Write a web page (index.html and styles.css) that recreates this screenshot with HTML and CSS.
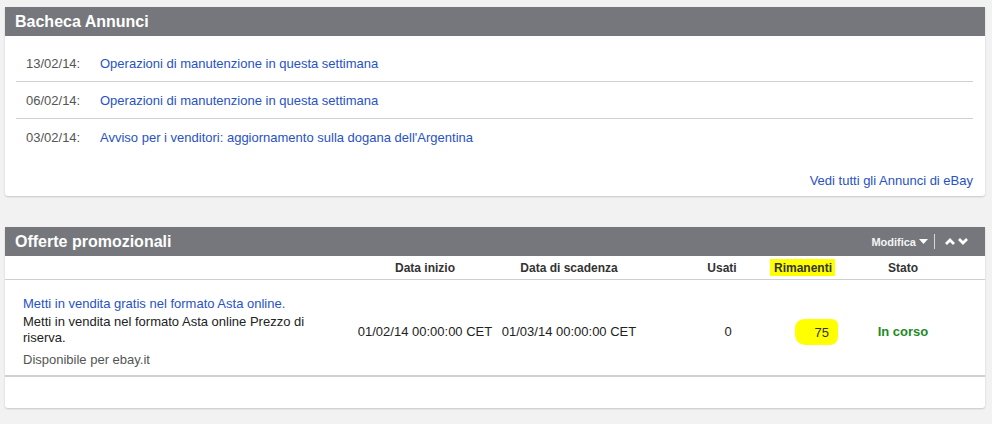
FILE: index.html
```
<!doctype html>
<html lang="it">
  <head>
    <meta charset="UTF-8" />
    <title>Bacheca</title>
    <link rel="stylesheet" href="styles.css">
  </head>
  <body>
    <div class="page">
      <div class="card">
        <div class="card-head">
          <h2>Bacheca Annunci</h2>
        </div>
        <div class="news">
          <div class="news-row">
            <span class="news-date">13/02/14:</span>
            <a href="#">Operazioni di manutenzione in questa settimana</a>
          </div>
          <div class="news-row">
            <span class="news-date">06/02/14:</span>
            <a href="#">Operazioni di manutenzione in questa settimana</a>
          </div>
          <div class="news-row">
            <span class="news-date">03/02/14:</span>
            <a href="#">Avviso per i venditori: aggiornamento sulla dogana dell'Argentina</a>
          </div>
        </div>
        <div class="news-foot">
          <a href="#">Vedi tutti gli Annunci di eBay</a>
        </div>
      </div>

      <div class="card promo">
        <div class="card-head">
          <h2>Offerte promozionali</h2>
          <div class="head-tools">
            <span class="modifica">Modifica</span>
            <svg class="caret" width="9" height="5" viewBox="0 0 9 5"><path d="M0 0h9L4.5 5z" fill="#fff"/></svg>
            <span class="tool-sep"></span>
            <svg class="chev" width="10" height="7" viewBox="0 0 10 7"><path d="M1 6L5 2L9 6" stroke="#fff" stroke-width="2.8" fill="none"/></svg>
            <svg class="chev down" width="10" height="7" viewBox="0 0 10 7"><path d="M1 1L5 5L9 1" stroke="#fff" stroke-width="2.8" fill="none"/></svg>
          </div>
        </div>
        <div class="promo-grid promo-labels">
          <span></span>
          <span>Data inizio</span>
          <span>Data di scadenza</span>
          <span class="c-used">Usati</span>
          <span class="c-left"><mark>Rimanenti</mark></span>
          <span class="c-state">Stato</span>
        </div>
        <div class="promo-grid promo-row">
          <div class="promo-desc">
            <a href="#">Metti in vendita gratis nel formato Asta online.</a>
            <p>Metti in vendita nel formato Asta online Prezzo di riserva.</p>
            <p class="avail">Disponibile per ebay.it</p>
          </div>
          <span>01/02/14 00:00:00 CET</span>
          <span>01/03/14 00:00:00 CET</span>
          <span class="c-used num">0</span>
          <span class="c-left"><mark class="blob">75</mark></span>
          <span class="c-state ok">In corso</span>
        </div>
        <div class="promo-empty"></div>
      </div>
    </div>
  </body>
</html>
```

FILE: styles.css
```
body {
  margin: 0;
  background: #f2f2f2;
  font-family: "Liberation Sans", Arial, sans-serif;
  font-size: 13px;
  color: #333;
}
a {
  color: #2852c4;
  text-decoration: none;
}
.page {
  width: 980px;
  padding: 7px 0 0 5px;
}
.card {
  background: #fff;
  border-radius: 0 0 3px 3px;
  box-shadow: 0 1px 2px rgba(0, 0, 0, 0.18);
  margin-bottom: 31px;
}
.card-head {
  height: 29px;
  background: #75777c;
  display: flex;
  align-items: center;
  justify-content: space-between;
  padding: 0 17px 0 10px;
}
.card-head h2 {
  margin: 0;
  color: #fff;
  font-size: 16px;
  font-weight: bold;
}

/* annunci */
.news {
  padding: 9px 12px 0 11px;
}
.news-row {
  height: 36px;
  display: flex;
  align-items: center;
  padding-left: 10px;
  border-bottom: 1px solid #d0d0d0;
}
.news-row:last-child {
  border-bottom: none;
}
.news-date {
  width: 74px;
  color: #555;
}
.news-foot {
  text-align: right;
  padding: 17px 12px 6px 0;
  line-height: 18px;
}

/* offerte */
.head-tools {
  display: flex;
  align-items: center;
}
.modifica {
  color: #f4f4f4;
  font-size: 11px;
  font-weight: bold;
}
.caret {
  margin-left: 3px;
}
.tool-sep {
  width: 1px;
  height: 15px;
  background: #d8d8d8;
  margin: 0 10px 0 6px;
}
.chev.down {
  margin-left: 3px;
}
.promo-grid {
  display: grid;
  grid-template-columns: 352px 136px 152px 125px 70px 145px;
  align-items: center;
  text-align: center;
}
.promo-labels {
  height: 23px;
  border-bottom: 1px solid #cfcfcf;
  font-weight: bold;
  font-size: 12px;
  color: #333;
}
.c-used {
  padding-left: 29px;
}
.c-left {
  text-align: right;
  padding-right: 5px;
  white-space: nowrap;
}
.c-state {
  padding-right: 19px;
}
mark {
  background: #ffff00;
  color: #333;
  padding: 2px 3px 1px 4px;
}
.promo-row {
  padding: 15px 0 7px;
  border-bottom: 2px solid #d0d0d0;
  color: #222;
}
.promo-desc {
  text-align: left;
  padding-left: 18px;
  padding-right: 20px;
}
.promo-desc a {
  display: block;
  line-height: 17px;
}
.promo-desc p {
  margin: 2px 0 0;
  line-height: 16px;
}
.promo-desc .avail {
  margin-top: 6px;
  color: #555;
  line-height: 16px;
}
.num {
  padding-left: 41px;
}
.blob {
  display: inline-block;
  margin-right: -3px;
  padding: 6px 9px 5px 20px;
  border-radius: 9px 6px 8px 10px;
}
.ok {
  color: #1d8a26;
  font-weight: bold;
}
.promo-empty {
  height: 31px;
}
```
